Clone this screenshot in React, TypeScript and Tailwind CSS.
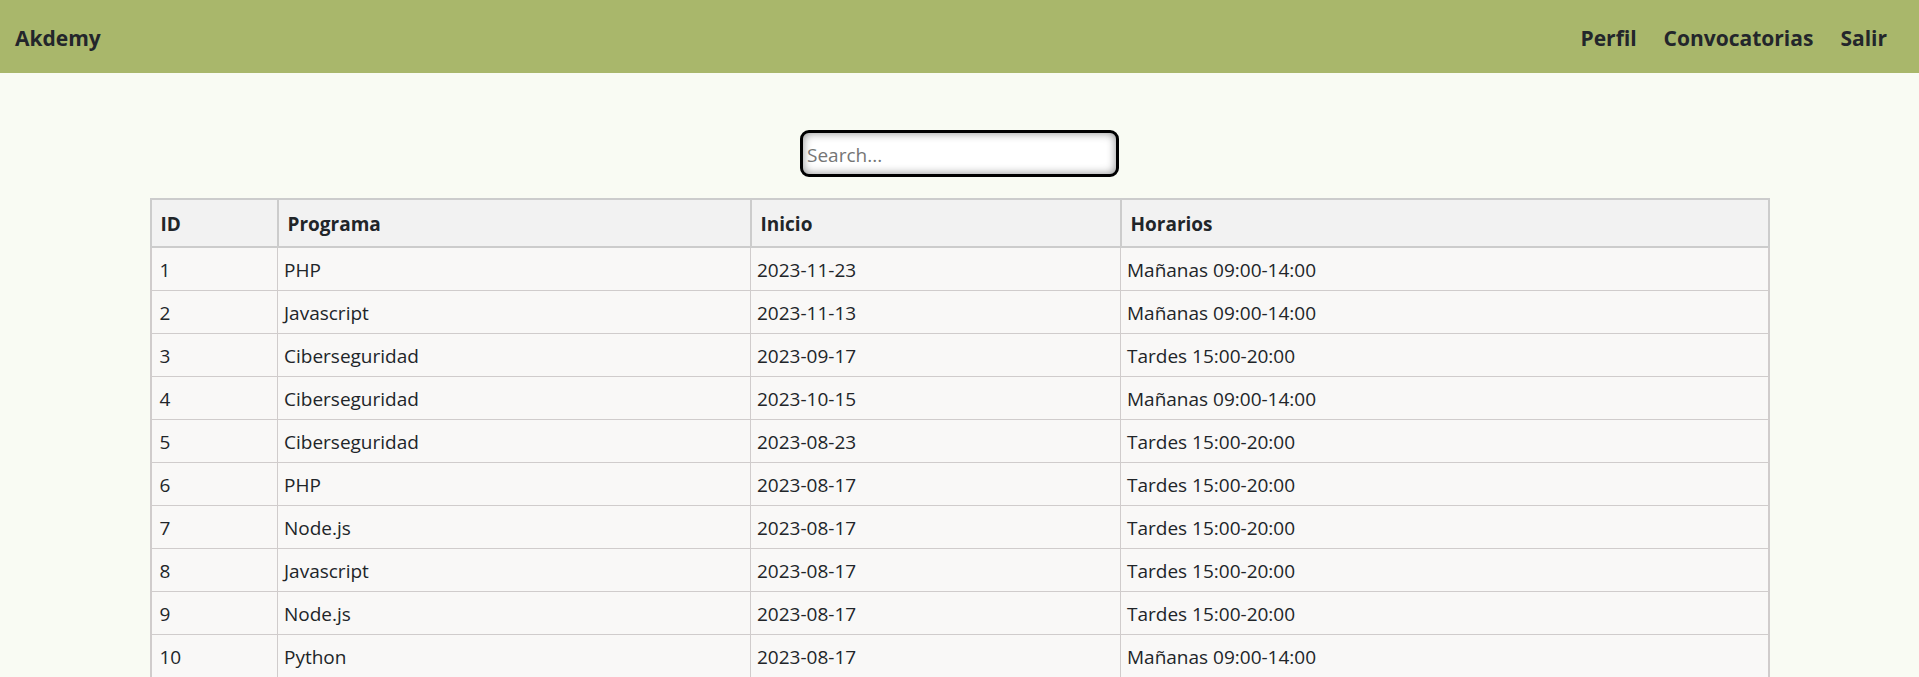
import React, { useState } from "react";

const convocatorias = [
  { id: 1, programa: "PHP", inicio: "2023-11-23", horario: "Mañanas 09:00-14:00" },
  { id: 2, programa: "Javascript", inicio: "2023-11-13", horario: "Mañanas 09:00-14:00" },
  { id: 3, programa: "Ciberseguridad", inicio: "2023-09-17", horario: "Tardes 15:00-20:00" },
  { id: 4, programa: "Ciberseguridad", inicio: "2023-10-15", horario: "Mañanas 09:00-14:00" },
  { id: 5, programa: "Ciberseguridad", inicio: "2023-08-23", horario: "Tardes 15:00-20:00" },
  { id: 6, programa: "PHP", inicio: "2023-08-17", horario: "Tardes 15:00-20:00" },
  { id: 7, programa: "Node.js", inicio: "2023-08-17", horario: "Tardes 15:00-20:00" },
  { id: 8, programa: "Javascript", inicio: "2023-08-17", horario: "Tardes 15:00-20:00" },
  { id: 9, programa: "Node.js", inicio: "2023-08-17", horario: "Tardes 15:00-20:00" },
  { id: 10, programa: "Python", inicio: "2023-08-17", horario: "Mañanas 09:00-14:00" },
];

export default function App() {
  const [search, setSearch] = useState("");

  const filtered = convocatorias.filter(
    (c) =>
      c.programa.toLowerCase().includes(search.toLowerCase()) ||
      c.horario.toLowerCase().includes(search.toLowerCase())
  );

  return (
    <div className="min-h-screen bg-[#f9fbf3] text-[#212529] font-['Open_Sans',sans-serif]">
      {/* Navbar */}
      <nav className="h-[73px] bg-[#a9b76b] flex items-center justify-between pt-[5px] pl-[15px] pr-[32px]">
        <a href="#" className="text-[21px] font-bold text-[#23262b]">Akdemy</a>
        <div className="flex items-center gap-[27px] text-[21px] font-bold text-[#23262b]">
          <a href="#">Perfil</a>
          <a href="#">Convocatorias</a>
          <a href="#">Salir</a>
        </div>
      </nav>

      <div className="flex justify-center pt-[57px]">
        <input
          type="text"
          placeholder="Search..."
          value={search}
          onChange={(e) => setSearch(e.target.value)}
          className="w-[319px] h-[47px] px-[4px] pt-[2px] bg-white border-[3px] border-black rounded-[9px] shadow-[inset_0_0_10px_rgba(0,0,0,0.45)] text-[19px] placeholder:text-[#757575] focus:outline-none"
        />
      </div>

      <div className="pt-[21px] flex justify-center">
        <table className="w-[1620px] border-collapse border-2 border-[#cccccc] text-[19px] text-left">
          <thead className="bg-[#f2f2f2]">
            <tr>
              <th className="w-[127px] border-2 border-[#cccccc] px-[9px] pt-[10px] pb-[8px] leading-[28px] font-bold">ID</th>
              <th className="w-[473px] border-2 border-[#cccccc] px-[9px] pt-[10px] pb-[8px] leading-[28px] font-bold">Programa</th>
              <th className="w-[370px] border-2 border-[#cccccc] px-[9px] pt-[10px] pb-[8px] leading-[28px] font-bold">Inicio</th>
              <th className="border-2 border-[#cccccc] px-[9px] pt-[10px] pb-[8px] leading-[28px] font-bold">Horarios</th>
            </tr>
          </thead>
          <tbody className="bg-[#f9f8f7]">
            {filtered.map((c) => (
              <tr key={c.id}>
                <td className="border border-[#d0cccc] border-l-2 px-[8px] pt-[8px] pb-[6px] leading-[28px]">{c.id}</td>
                <td className="border border-[#d0cccc] px-[6px] pt-[8px] pb-[6px] leading-[28px]">{c.programa}</td>
                <td className="border border-[#d0cccc] px-[6px] pt-[8px] pb-[6px] leading-[28px]">{c.inicio}</td>
                <td className="border border-[#d0cccc] border-r-2 px-[6px] pt-[8px] pb-[6px] leading-[28px]">{c.horario}</td>
              </tr>
            ))}
          </tbody>
        </table>
      </div>
    </div>
  );
}
